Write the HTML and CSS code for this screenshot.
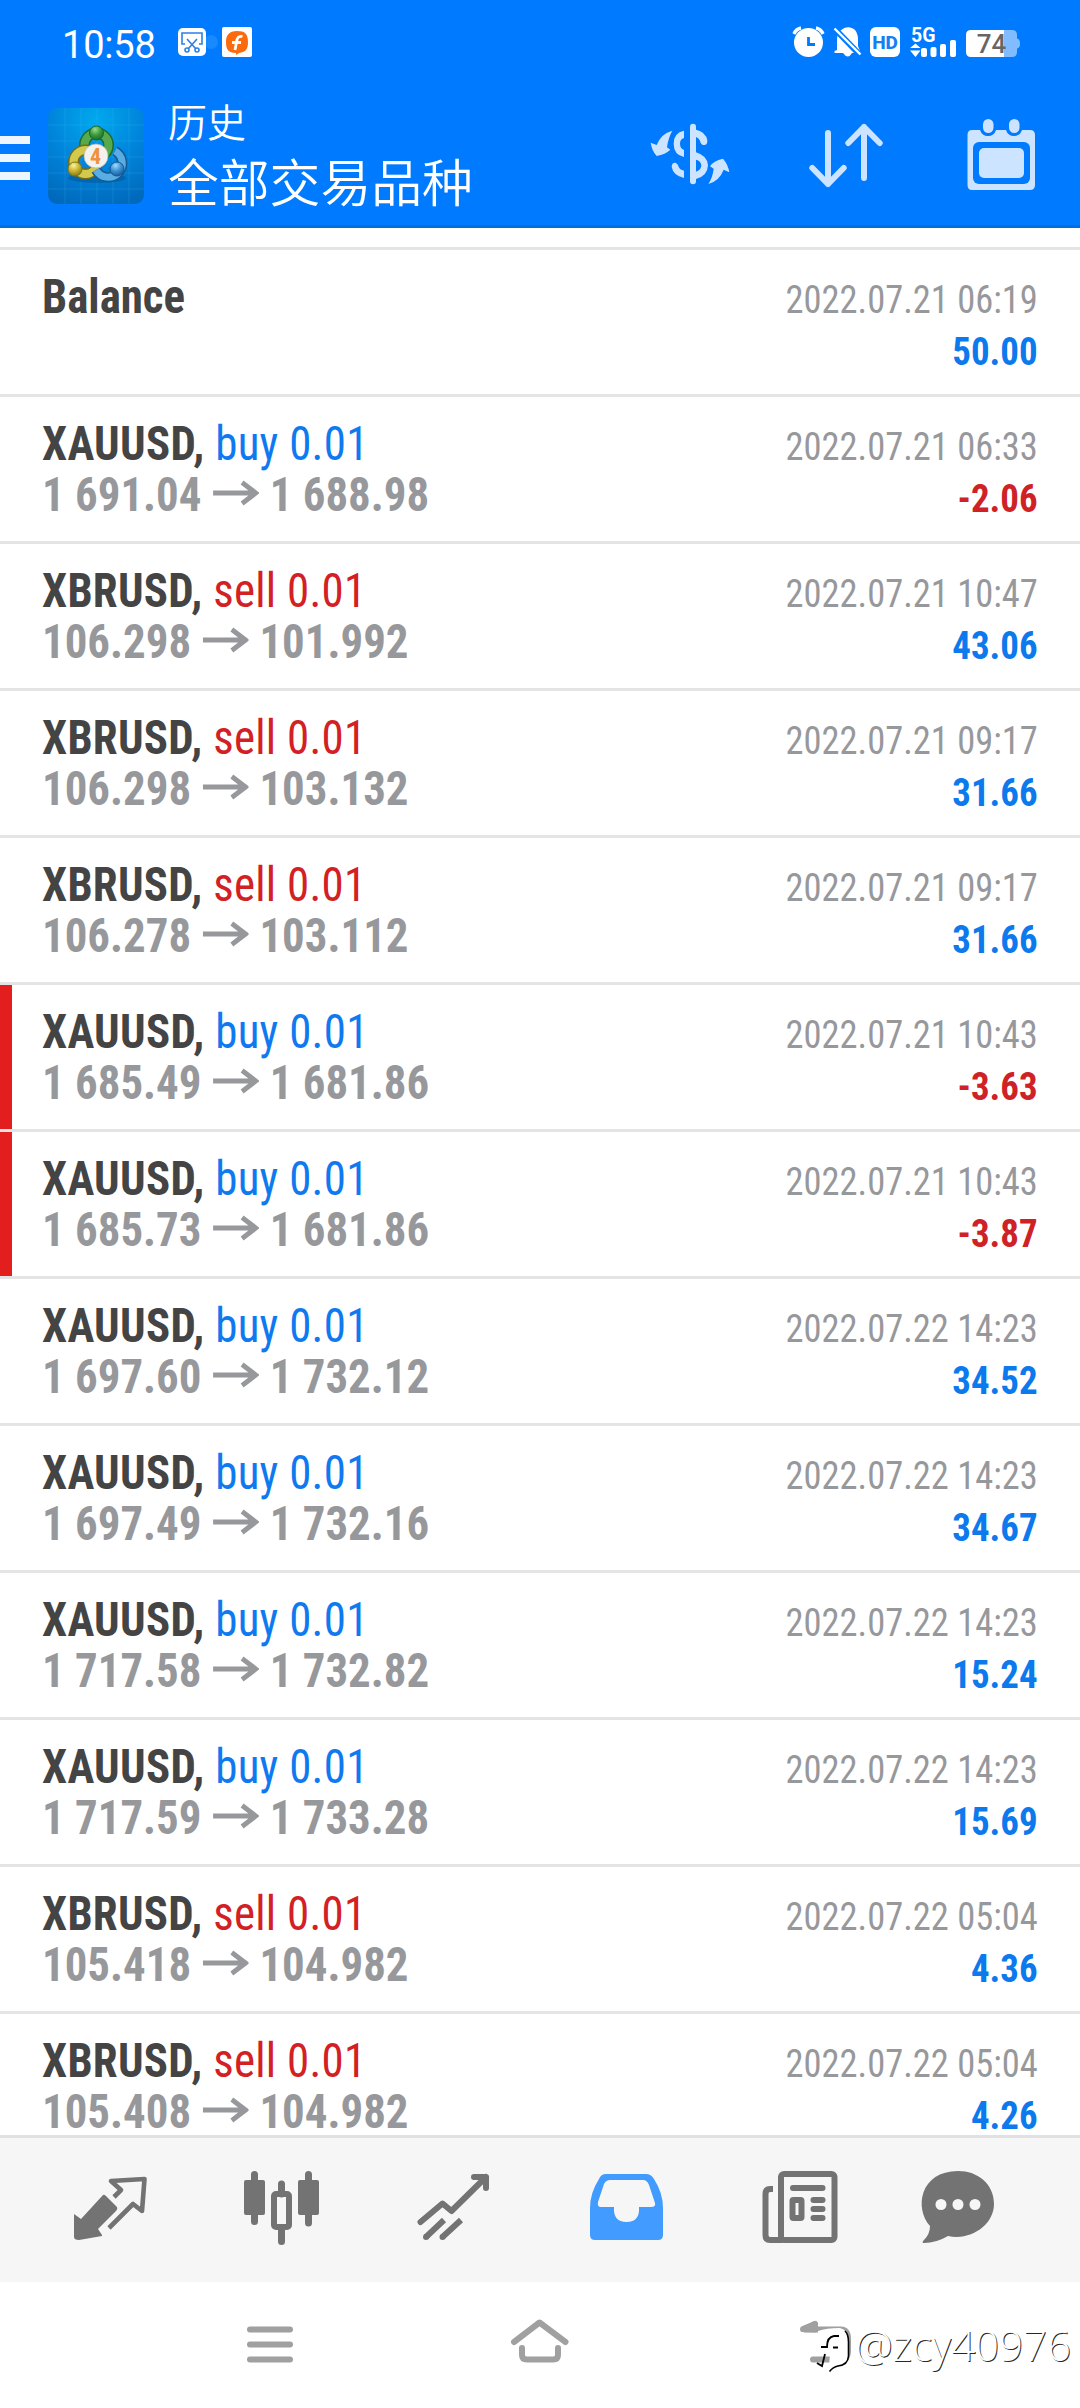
FILE: index.html
```html
<!DOCTYPE html>
<html lang="zh-CN">
<head>
<meta charset="utf-8">
<title>历史</title>
<link rel="stylesheet" href="styles.css">
</head>
<body>
<svg class="defs" width="0" height="0">
  <symbol id="arrow" viewBox="0 0 49 26"><path d="M0 13H45M31 2.500L45.500 13L31 23.500" fill="none" stroke="currentColor" stroke-width="5.200"/></symbol>
</svg>
<div class="app">
  <header class="header">
    <div class="status">
      <span class="clock">10:58</span>
      <svg class="notices" width="76" height="34" viewBox="0 0 76 34">
        <circle cx="33" cy="17" r="7" fill="#178aff"/>
        <rect x="0" y="3" width="28" height="28" rx="5" fill="#fff"/>
        <g fill="none" stroke="#2f7fe6" stroke-width="1.600">
          <path d="M7 19H4V8H24V19H21M9 14L18 24M19 14L10 24"/>
          <circle cx="9" cy="25" r="2"/><circle cx="19" cy="25" r="2"/>
        </g>
        <rect x="44" y="2" width="30" height="30" rx="2" fill="#fff"/>
        <path d="M59 6C67 6 70 9 70 17S67 27 61 28L58 30V28C50 28 48 24 48 17S51 6 59 6Z" fill="#fb6a0c"/>
        <path d="M64.500 11.500C60.500 10.500 59 13 58.500 17L57 25M54 17.500H63" fill="none" stroke="#fff" stroke-width="2.800"/>
      </svg>
      <svg class="signals" width="230" height="34" viewBox="792 25 230 34">
        <g fill="#fff">
          <circle cx="808.500" cy="42.500" r="14.500"/>
          <path d="M794 34Q796 29 801 28" fill="none" stroke="#fff" stroke-width="3.400"/>
          <path d="M823 34Q821 29 816 28" fill="none" stroke="#fff" stroke-width="3.400"/>
          <path d="M808.500 37V44.500H815" fill="none" stroke="#007aff" stroke-width="2.800"/>
          <path d="M837 50V40C837 25 857 22 858 38V46L860 51V53H852Q848 60 843 53H834.500V51Z"/>
          <path d="M833 27L862 57" stroke="#007aff" stroke-width="6"/>
          <path d="M834.500 28.500L860.500 54.500" stroke="#fff" stroke-width="2.400"/>
          <rect x="870" y="27" width="30" height="30" rx="6"/>
          <path d="M910 48L915.500 43.500L920.500 48ZM910 50.500L915.500 57L920.500 50.500Z"/>
          <rect x="921" y="48" width="6" height="9" rx="2"/><rect x="930.500" y="47" width="6" height="10" rx="2"/>
          <rect x="940" y="44" width="6" height="13" rx="2"/><rect x="950" y="40" width="6" height="17" rx="2"/>
          <path d="M971 30H1004V57H971Q966 57 966 52V35Q966 30 971 30Z"/>
          <path d="M1004 30H1012Q1017 30 1017 35V38.500Q1020 39 1020 43.500T1017 48.500V52Q1017 57 1012 57H1004Z" fill="#80bcff"/>
        </g>
        <text x="885" y="49" class="hd">HD</text>
        <text x="911" y="41.500" class="net">5G</text>
        <text x="991.500" y="52.500" class="level">74</text>
      </svg>
    </div>
    <div class="bar">
      <svg class="menu" width="30" height="44" viewBox="0 0 30 44"><path d="M0 4H30M0 22H30M0 40H30" stroke="#edf6ff" stroke-width="8"/></svg>
      <svg class="logo" width="96" height="96" viewBox="0 0 96 96">
        <defs>
          <radialGradient id="sky" cx=".5" cy=".12" r=".95"><stop offset="0" stop-color="#00a9ee"/><stop offset=".5" stop-color="#0085dc"/><stop offset="1" stop-color="#0068ba"/></radialGradient>
          <radialGradient id="green" cx=".4" cy=".25" r=".8"><stop offset="0" stop-color="#9ed98c"/><stop offset=".5" stop-color="#3d9b3c"/><stop offset="1" stop-color="#17692b"/></radialGradient>
          <radialGradient id="gold" cx=".4" cy=".25" r=".8"><stop offset="0" stop-color="#faf2a0"/><stop offset=".5" stop-color="#c9b42f"/><stop offset="1" stop-color="#7f7518"/></radialGradient>
          <radialGradient id="blue" cx=".4" cy=".25" r=".8"><stop offset="0" stop-color="#a5d8fa"/><stop offset=".5" stop-color="#3a92d2"/><stop offset="1" stop-color="#125796"/></radialGradient>
        </defs>
        <rect width="96" height="96" rx="9" fill="url(#sky)"/>
        <path d="M17 0V96M33 0V96M49 0V96M65 0V96M81 0V96M0 17H96M0 33H96M0 49H96M0 65H96M0 81H96" stroke="#4bc1f5" stroke-opacity=".2"/>
        <ellipse cx="49" cy="70" rx="29" ry="5" fill="#034e8a" opacity=".45"/>
        <circle cx="48.500" cy="37" r="12" fill="none" stroke="#1f6b2c" stroke-width="11"/>
        <circle cx="48.500" cy="37" r="12" fill="none" stroke="#57a94d" stroke-width="8"/>
        <circle cx="37.500" cy="54" r="12" fill="none" stroke="#746b1c" stroke-width="11"/>
        <circle cx="37.500" cy="54" r="12" fill="none" stroke="#d3c94a" stroke-width="8"/>
        <path d="M67 43A14 14 0 1 1 48 62" fill="none" stroke="#175a94" stroke-width="10"/>
        <path d="M67 43A14 14 0 1 1 48 62" fill="none" stroke="#58ade3" stroke-width="7"/>
        <circle cx="48.500" cy="25" r="7" fill="url(#green)" stroke="#17692b"/>
        <circle cx="27" cy="61" r="7" fill="url(#gold)" stroke="#7f7518"/>
        <circle cx="69" cy="61" r="7" fill="url(#blue)" stroke="#125796"/>
        <circle cx="48" cy="48" r="12" fill="#f4f2ef" stroke="#b9b7ad" stroke-width=".800"/>
        <text x="47.500" y="56" class="version">4</text>
      </svg>
      <div class="titles"><div class="title">历史</div><div class="subtitle">全部交易品种</div></div>
      <svg class="act-money" width="80" height="64" viewBox="30 36 240 192" fill="#cce4ff">
        <rect x="150" y="41" width="18" height="182" rx="9"/>
        <path d="M132 62Q101 68 101 101Q101 134 132 141V120Q120 115 120 101T132 84ZM168 59Q197 65 202 91Q203 106 191 105Q182 104 180 92Q177 84 168 81ZM168 127Q202 137 204 166Q203 198 168 207V185Q184 180 184 166Q183 153 168 149ZM132 182V204Q99 196 95 170Q96 157 106 158Q113 160 115 168Q119 180 132 182Z"/>
        <path d="M97 62Q85 82 81 112L91 119Q76 133 50 138Q36 123 32 98L50 105Q63 71 97 62Z"/>
        <path d="M205 222Q218 202 221 176L210 169Q220 152 249 146Q264 163 268 187L251 179Q238 213 205 222Z"/>
      </svg>
      <svg class="act-sort" width="76" height="66" viewBox="504 36 228 198" fill="none" stroke="#cce4ff" stroke-width="18" stroke-linecap="round" stroke-linejoin="round"><path d="M564 69V222M517 174L564 222L611 174M672 204V51M625 99L672 51L719 99"/></svg>
      <svg class="act-date" width="69" height="72" viewBox="0 0 69 72" fill="#cce4ff">
        <path d="M5 11H13Q15 17 21 17T29 11H39Q41 17 47 17T55 11H63Q68 11 68 16V66Q68 71 63 71H5Q.500 71 .500 66V16Q.500 11 5 11Z"/>
        <rect x="6" y="23" width="57" height="42" rx="6" fill="#007aff"/>
        <rect x="12" y="29" width="45" height="30" rx="5"/>
        <rect x="14" y="-2" width="14.500" height="18.500" rx="7" fill="#007aff"/><rect x="40" y="-2" width="14.500" height="18.500" rx="7" fill="#007aff"/>
        <rect x="16" y="0" width="10.500" height="14" rx="5.250"/><rect x="42" y="0" width="10.500" height="14" rx="5.250"/>
      </svg>
    </div>
  </header>

  <main class="list">
    <div class="row"><div class="deal"><p><b>Balance</b></p></div><div class="result"><p class="date">2022.07.21 06:19</p><p class="profit">50.00</p></div></div>
    <div class="row"><div class="deal"><p class="order"><b>XAUUSD,</b> <span class="buy">buy 0.01</span></p><p class="price">1 691.04<svg class="to"><use href="#arrow"/></svg>1 688.98</p></div><div class="result"><p class="date">2022.07.21 06:33</p><p class="profit loss">-2.06</p></div></div>
    <div class="row"><div class="deal"><p class="order"><b>XBRUSD,</b> <span class="sell">sell 0.01</span></p><p class="price">106.298<svg class="to"><use href="#arrow"/></svg>101.992</p></div><div class="result"><p class="date">2022.07.21 10:47</p><p class="profit">43.06</p></div></div>
    <div class="row"><div class="deal"><p class="order"><b>XBRUSD,</b> <span class="sell">sell 0.01</span></p><p class="price">106.298<svg class="to"><use href="#arrow"/></svg>103.132</p></div><div class="result"><p class="date">2022.07.21 09:17</p><p class="profit">31.66</p></div></div>
    <div class="row"><div class="deal"><p class="order"><b>XBRUSD,</b> <span class="sell">sell 0.01</span></p><p class="price">106.278<svg class="to"><use href="#arrow"/></svg>103.112</p></div><div class="result"><p class="date">2022.07.21 09:17</p><p class="profit">31.66</p></div></div>
    <div class="row stopped"><div class="deal"><p class="order"><b>XAUUSD,</b> <span class="buy">buy 0.01</span></p><p class="price">1 685.49<svg class="to"><use href="#arrow"/></svg>1 681.86</p></div><div class="result"><p class="date">2022.07.21 10:43</p><p class="profit loss">-3.63</p></div></div>
    <div class="row stopped"><div class="deal"><p class="order"><b>XAUUSD,</b> <span class="buy">buy 0.01</span></p><p class="price">1 685.73<svg class="to"><use href="#arrow"/></svg>1 681.86</p></div><div class="result"><p class="date">2022.07.21 10:43</p><p class="profit loss">-3.87</p></div></div>
    <div class="row"><div class="deal"><p class="order"><b>XAUUSD,</b> <span class="buy">buy 0.01</span></p><p class="price">1 697.60<svg class="to"><use href="#arrow"/></svg>1 732.12</p></div><div class="result"><p class="date">2022.07.22 14:23</p><p class="profit">34.52</p></div></div>
    <div class="row"><div class="deal"><p class="order"><b>XAUUSD,</b> <span class="buy">buy 0.01</span></p><p class="price">1 697.49<svg class="to"><use href="#arrow"/></svg>1 732.16</p></div><div class="result"><p class="date">2022.07.22 14:23</p><p class="profit">34.67</p></div></div>
    <div class="row"><div class="deal"><p class="order"><b>XAUUSD,</b> <span class="buy">buy 0.01</span></p><p class="price">1 717.58<svg class="to"><use href="#arrow"/></svg>1 732.82</p></div><div class="result"><p class="date">2022.07.22 14:23</p><p class="profit">15.24</p></div></div>
    <div class="row"><div class="deal"><p class="order"><b>XAUUSD,</b> <span class="buy">buy 0.01</span></p><p class="price">1 717.59<svg class="to"><use href="#arrow"/></svg>1 733.28</p></div><div class="result"><p class="date">2022.07.22 14:23</p><p class="profit">15.69</p></div></div>
    <div class="row"><div class="deal"><p class="order"><b>XBRUSD,</b> <span class="sell">sell 0.01</span></p><p class="price">105.418<svg class="to"><use href="#arrow"/></svg>104.982</p></div><div class="result"><p class="date">2022.07.22 05:04</p><p class="profit">4.36</p></div></div>
    <div class="row"><div class="deal"><p class="order"><b>XBRUSD,</b> <span class="sell">sell 0.01</span></p><p class="price">105.408<svg class="to"><use href="#arrow"/></svg>104.982</p></div><div class="result"><p class="date">2022.07.22 05:04</p><p class="profit">4.26</p></div></div>
  </main>

  <nav class="tabs">
    <svg width="172" height="144" viewBox="24 0 172 144">
      <path d="M74 76L81 81L103 57Q104 56 106 58L117 69Q118 71 116 73L98 91L102 97V98L79 102Q74 102 74 99Z"/>
      <path d="M114 59L121 52L111 43L144.500 41L142 73L133 66L109 90" fill="none" stroke="#737373" stroke-width="4.600" stroke-linejoin="round"/>
    </svg>
    <svg width="172" height="144" viewBox="196 0 172 144">
      <rect x="244" y="42" width="21" height="35" rx="2"/><rect x="298" y="42" width="21" height="35" rx="2"/>
      <path d="M254.500 36.500V83.500M308.500 36.500V85M281.500 46V56M281.500 92V103.500" stroke="#737373" stroke-width="7" stroke-linecap="round"/>
      <rect x="274" y="56" width="15" height="33" rx="2" fill="none" stroke="#737373" stroke-width="6"/>
    </svg>
    <svg width="172" height="144" viewBox="368 0 172 144" fill="none" stroke="#737373" stroke-width="6" stroke-linecap="round" stroke-linejoin="round">
      <path d="M420.500 84L442.500 65.500L451.500 73L486 39M474 39H486V50"/>
      <path d="M426 99L444 82M442.500 99L461 82" stroke-linecap="butt"/><path d="M426 99h.1M442.500 99h.1"/>
    </svg>
    <svg width="172" height="144" viewBox="540 0 172 144">
      <path fill="#429cff" fill-rule="evenodd" d="M606 36H646Q651 36 654 41Q663 55 663 70V97Q663 102 658 102H595Q590 102 590 97V70Q590 55 599 41Q601 36 606 36ZM610 42Q606 42 604 46L598 64Q597 69 601 69H614Q613 84 626.500 84T639 69H651Q656 69 655 65L649 47Q647 42 643 42Z"/>
    </svg>
    <svg width="172" height="144" viewBox="712 0 172 144" fill="none" stroke="#737373" stroke-width="6">
      <rect x="781" y="36" width="53.500" height="66" rx="3"/><path d="M773 51H770Q765.500 51 765.500 56V97Q765.500 102 770 102H783"/>
      <path d="M793 50H822.500M813.500 62H822.500M813.500 71H822.500M813.500 80H822.500" stroke-linecap="round"/>
      <rect x="792.500" y="62" width="9" height="18" rx="1"/>
    </svg>
    <svg width="172" height="144" viewBox="884 0 172 144">
      <path d="M958 33C978 33 994 46 994 66C994 86 972 103 948 98Q936 105 924 105Q921 105 924 102Q930 96 930 88C914 70 920 33 958 33Z"/>
      <g fill="#f6f6f6"><circle cx="941" cy="66.500" r="5.500"/><circle cx="958" cy="66.500" r="5.500"/><circle cx="975" cy="66.500" r="5.500"/></g>
    </svg>
  </nav>

  <footer class="system">
    <svg width="270" height="126" viewBox="135 0 270 126"><path d="M250 47.500H290M250 62.500H290M250 77.500H290"/></svg>
    <svg width="270" height="126" viewBox="405 0 270 126"><path d="M514 60L539.500 40.500L565.500 60M522 66V73Q522 77.500 527 77.500H553Q558 77.500 558 73V66"/></svg>
    <svg width="270" height="126" viewBox="675 0 270 126"><path d="M815 42L805 47.500H841Q848 48 848 57V68Q848 77.500 841 77.500H813"/><path d="M803 47L815 42V47.500Z" fill="#a0a0a0"/></svg>
    <div class="watermark">
      <svg width="38" height="52" viewBox="815 40 38 52">
        <path d="M820 49Q828 46 842 46Q850 48 850 57V75Q850 83 840 84Q835 85 831 90V84L832 72H820V60Z" fill="#fff"/>
        <path d="M847 49Q850.500 52 850.500 60V74Q850 83 840 84Q835 85 831.500 89.500" fill="none" stroke="#000" stroke-width="1.600"/>
        <path d="M841 54H836Q829 55 829 65H823M835 65.500H840M827 72L824 84L819 81" fill="none" stroke="#000" stroke-width="1.800"/>
      </svg>
      <span>@zcy40976</span>
    </div>
  </footer>
</div>
</body>
</html>
```
FILE: styles.css
```css
* { box-sizing: border-box; }
body { margin: 0; background: #fff; }
p { margin: 0; }
svg { display: block; flex: none; }
.defs { position: absolute; }

.app {
  display: flex;
  flex-direction: column;
  width: 1080px;
  height: 2408px;
  overflow: hidden;
  font-family: "Roboto Condensed", Roboto, sans-serif;
}

/* Header */
.header {
  flex: none;
  height: 228px;
  background: #007aff;
  border-bottom: 3px solid #006edb;
}
.status {
  display: flex;
  align-items: center;
  height: 84px;
  padding: 0 58px 0 62px;
}
.clock {
  width: 116px;
  font: 400 38px/46px Roboto, sans-serif;
  letter-spacing: -0.2px;
  color: #fff;
  padding-top: 5px;
}
.signals { margin-left: auto; }
.hd { font: 800 19px Roboto, sans-serif; fill: #1580f5; text-anchor: middle; }
.net { font: 700 19.500px Roboto, sans-serif; fill: #fff; }
.level { font: 500 26px Roboto, sans-serif; fill: #666; text-anchor: middle; }
.bar {
  display: flex;
  align-items: flex-start;
  height: 141px;
}
.menu { margin: 52px 18px 0 0; }
.logo { margin-top: 24px; }
.version { font: 700 22px "Roboto Condensed", sans-serif; fill: #ee923f; text-anchor: middle; }
.titles {
  width: 482px;
  padding-left: 24px;
  color: #fff;
  font-family: "Noto Sans CJK SC", sans-serif;
  font-weight: 350;
  white-space: nowrap;
}
.title { margin-top: 8px; font-size: 39px; line-height: 56px; }
.subtitle { font-size: 50.800px; line-height: 64px; }
.act-money { margin: 38px 0 0 24px; }
.act-sort { margin: 38px 0 0 78px; }
.act-date { margin: 35px 0 0 83px; }

/* Deals */
.list {
  flex: 1;
  min-height: 0;
  padding-top: 19px;
  overflow: hidden;
}
.row {
  display: flex;
  justify-content: space-between;
  height: 147px;
  padding: 21px 42px 0;
  border-top: 3px solid #e4e4e4;
  line-height: 51px;
  white-space: nowrap;
}
.stopped { background: linear-gradient(#e21e1e, #e21e1e) left / 12px 100% no-repeat; }
.deal {
  font-size: 48px;
  color: #444;
  transform: scaleX(0.935);
  transform-origin: left;
}
.order { letter-spacing: 0.3px; }
.result {
  font-size: 39px;
  text-align: right;
  transform: scaleX(0.935);
  transform-origin: right;
  padding-top: 4px;
}
.buy { color: #0f7af0; }
.sell { color: #d32024; }
.price { font-weight: 700; color: #97989b; }
.to {
  display: inline-block;
  width: 49px;
  height: 26px;
  margin: 0 12px;
  vertical-align: 5px;
}
.date { color: #97989b; }
.profit { font-size: 39.500px; font-weight: 700; color: #0c79ed; }
.loss { color: #cf2227; }

/* Bottom bars */
.tabs {
  flex: none;
  display: flex;
  height: 147px;
  padding: 0 24px;
  background: #f6f6f6;
  border-top: 3px solid #e1e1e1;
}
.tabs svg { fill: #737373; }
.tabs svg:nth-child(3), .tabs svg:nth-child(5) { fill: none; }
.system {
  position: relative;
  flex: none;
  display: flex;
  justify-content: center;
  height: 126px;
  background: #fff;
}
.system > svg {
  fill: none;
  stroke: #a0a0a0;
  stroke-width: 6;
  stroke-linecap: round;
  stroke-linejoin: round;
}
.watermark {
  position: absolute;
  right: 9px;
  top: 40px;
  display: flex;
  color: #fff;
  font: 300 42px/52px "Open Sans", sans-serif;
  text-shadow: 1px 1px 0 rgba(0, 0, 0, 0.85);
}
.watermark span { margin: -3px 0 0 4px; }
```
